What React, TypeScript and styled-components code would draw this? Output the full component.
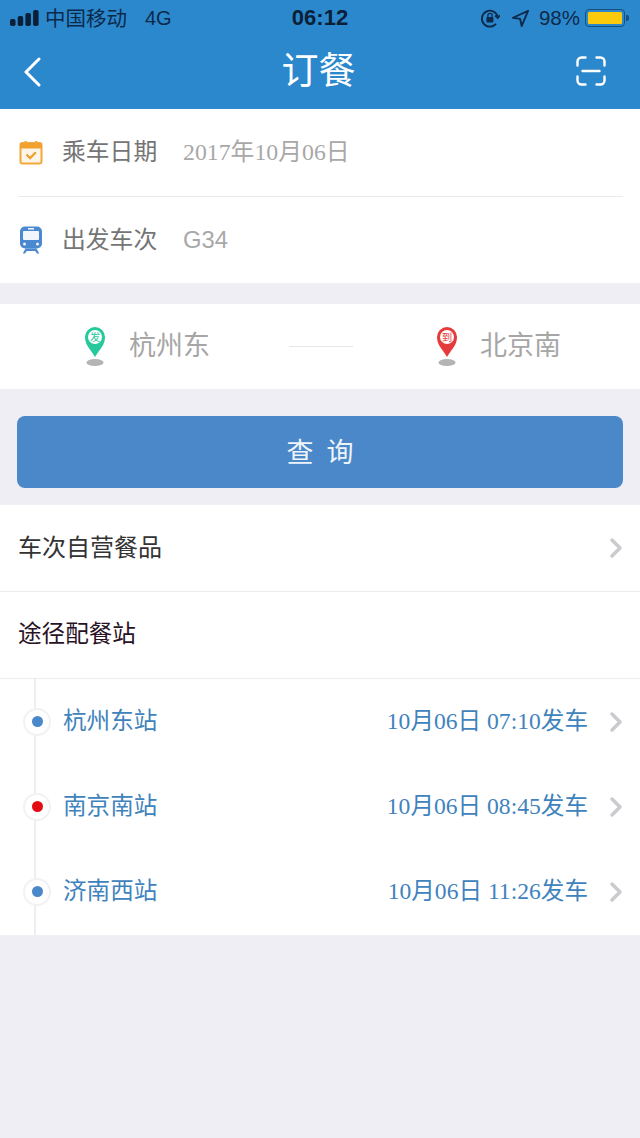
import React from "react";
import styled, { createGlobalStyle } from "styled-components";

const Global = createGlobalStyle`
  html, body { margin: 0; padding: 0; background: #eeeef4; }
  * { box-sizing: border-box; }
  body { font-family: "Noto Sans CJK SC", "Liberation Sans", sans-serif; }
`;

const Page = styled.div`
  width: 640px;
  height: 1138px;
  background: #eeeef4;
  overflow: hidden;
`;

const Header = styled.header`
  height: 109px;
  background: #2b88cd;
  display: flex;
  flex-direction: column;
`;

const StatusBar = styled.div`
  height: 36px;
  padding: 0 10px;
  display: grid;
  grid-template-columns: 1fr auto 1fr;
  align-items: center;
  color: #0c2a4a;
  font-size: 20.500px;
  font-family: "Liberation Sans", "Noto Sans CJK SC", sans-serif;
`;

const StatusLeft = styled.div`
  display: flex;
  align-items: center;
  gap: 6px;
`;

const Carrier = styled.span`
  padding-bottom: 2px;
`;

const Network = styled.span`
  margin-left: 12px;
  font-size: 20px;
`;

const StatusTime = styled.div`
  font-weight: 700;
  font-size: 22px;
  color: #0a1f38;
`;

const StatusRight = styled.div`
  display: flex;
  justify-content: flex-end;
  align-items: center;
  padding-right: 5px;
`;

const Percent = styled.span`
  margin: 0 5px 0 10px;
  font-size: 20.500px;
`;

const Battery = styled.span`
  width: 40px;
  height: 18px;
  border: 1.500px solid #17507f;
  border-radius: 4px;
  padding: 2px;
  display: flex;
  position: relative;

  &::after {
    content: "";
    position: absolute;
    right: -4.500px;
    top: 4.500px;
    width: 2.500px;
    height: 6px;
    border-radius: 0 2px 2px 0;
    background: #17507f;
  }
`;

const BatteryLevel = styled.span`
  flex: 1;
  background: #fdc90b;
  border-radius: 1.500px;
`;

const NavBar = styled.div`
  flex: 1;
  padding: 0 34px 0 23px;
  margin-top: -4px;
  display: flex;
  justify-content: space-between;
  align-items: center;
`;

const NavTitle = styled.h1`
  margin: 0;
  color: #fff;
  font-size: 37px;
  line-height: 1;
  font-weight: 400;
  flex: 1;
  text-align: center;
  padding: 0 0 4px 20px;
`;

const BackSlot = styled.span`
  display: flex;
  padding-top: 2px;
`;

const Card = styled.section`
  background: #fff;
`;

const FieldRow = styled.div<{ $height: number; $last?: boolean }>`
  height: ${(p) => p.$height}px;
  margin: 0 17px 0 18px;
  display: flex;
  align-items: center;
  border-bottom: ${(p) => (p.$last ? "none" : "1px solid #e9e9ee")};
`;

const FieldLabel = styled.span`
  margin-left: 19px;
  width: 121px;
  font-size: 23.800px;
  color: #757575;
  padding-bottom: 6px;
`;

const FieldValue = styled.span`
  font-family: "Liberation Serif", "Noto Sans CJK SC", serif;
  font-size: 23.800px;
  color: #a8a8a8;
  padding-bottom: 6px;
`;

const TrainValue = styled(FieldValue)`
  font-family: "Liberation Sans", sans-serif;
  padding-bottom: 0;
`;

const RouteCard = styled(Card)`
  margin-top: 21px;
  height: 85px;
  display: grid;
  grid-template-columns: 289px 64px 1fr;
  align-items: center;
`;

const RouteStop = styled.div<{ $pad: number; $gap: number }>`
  display: flex;
  align-items: center;
  padding-left: ${(p) => p.$pad}px;
  gap: ${(p) => p.$gap}px;
  font-size: 27px;
  color: #a6a6a6;
`;

const RouteName = styled.span`
  padding-bottom: 6px;
`;

const RouteLine = styled.div`
  height: 1px;
  background: #e6e6ea;
`;

const QueryButton = styled.button`
  display: block;
  margin: 27px 17px 17px;
  width: 606px;
  height: 72px;
  padding: 0 0 3px;
  border: none;
  border-radius: 8px;
  background: #4a88c9;
  color: #eef4fa;
  font-family: inherit;
  font-size: 27px;
  word-spacing: 7px;
`;

const LinkRow = styled.div<{ $height: number; $tint?: string; $size?: number }>`
  height: ${(p) => p.$height}px;
  padding: 0 17px 0 18px;
  display: flex;
  justify-content: space-between;
  align-items: center;
  font-size: ${(p) => p.$size ?? 24}px;
  color: ${(p) => p.$tint ?? "#333"};
  border-bottom: 1px solid #ebebf0;
`;

const LinkText = styled.span`
  padding-bottom: 6px;
`;

const Timeline = styled.div`
  height: 256px;
  position: relative;
  display: flex;
  flex-direction: column;

  &::before {
    content: "";
    position: absolute;
    left: 34px;
    top: 0;
    bottom: 0;
    width: 2px;
    background: #eeeef2;
  }
`;

const StopRow = styled.div`
  height: 85px;
  padding: 0 17px 0 23px;
  display: flex;
  align-items: center;
  position: relative;
`;

const Marker = styled.span`
  width: 28px;
  height: 28px;
  flex: none;
  border-radius: 50%;
  background: #fff;
  border: 2px solid #f3f1f4;
  display: flex;
  align-items: center;
  justify-content: center;
`;

const MarkerDot = styled.span<{ $color: string }>`
  width: 11px;
  height: 11px;
  border-radius: 50%;
  background: ${(p) => p.$color};
`;

const StopName = styled.span`
  margin-left: 12px;
  font-size: 23.600px;
  color: #3f83bd;
  padding-bottom: 6px;
`;

const StopTime = styled.span`
  margin-left: auto;
  margin-right: 21px;
  font-family: "Liberation Serif", "Noto Sans CJK SC", serif;
  font-size: 23.600px;
  color: #3f83bd;
  padding-bottom: 6px;
`;

const SignalIcon = () => (
  <svg width="29" height="16" viewBox="0 0 29 16" fill="#0a1f38">
    <rect x="0" y="9" width="5.500" height="7" rx="1.800" />
    <rect x="7.700" y="6" width="5.500" height="10" rx="1.800" />
    <rect x="15.400" y="3" width="5.500" height="13" rx="1.800" />
    <rect x="23.100" y="0" width="5.500" height="16" rx="1.800" />
  </svg>
);

const RotationLockIcon = () => (
  <svg width="20" height="20" viewBox="0 0 20 20" fill="none" stroke="#0c2a4a" strokeWidth="1.800">
    <path d="M17.600 8.500A8 8 0 1 0 16 15.900" />
    <path d="M15 7.600l2.800 2.400 2-2.800" />
    <rect x="6.400" y="9" width="7" height="5.600" rx="1" fill="#0c2a4a" stroke="none" />
    <path d="M7.900 9V7.400a2.100 2.100 0 0 1 4.200 0V9" strokeWidth="1.300" />
  </svg>
);

const LocationIcon = () => (
  <svg width="17" height="17" viewBox="0 0 18 18" fill="none" stroke="#0c2a4a" strokeWidth="2" strokeLinejoin="round" style={{ marginLeft: 12 }}>
    <path d="M17 1L1 8.200l7.600 1.200L10.200 17z" />
  </svg>
);

const BackIcon = () => (
  <svg width="18" height="30" viewBox="0 0 18 30" fill="none" stroke="#fff" strokeWidth="3" strokeLinecap="round" strokeLinejoin="round">
    <path d="M16 2L3 15l13 13" />
  </svg>
);

const ScanIcon = () => (
  <svg width="30" height="30" viewBox="0 0 30 30" fill="none" stroke="#fff" strokeWidth="2.400" strokeLinecap="round">
    <path d="M9.500 1.500H5.500a4 4 0 0 0-4 4v4" />
    <path d="M20.500 1.500h4a4 4 0 0 1 4 4v4" />
    <path d="M9.500 28.500H5.500a4 4 0 0 1-4-4v-4" />
    <path d="M20.500 28.500h4a4 4 0 0 0 4-4v-4" />
    <path d="M6.500 15h17" />
  </svg>
);

const CalendarIcon = () => (
  <svg width="25" height="25" viewBox="0 0 25 25" fill="none">
    <rect x="2.500" y="3" width="21" height="20.500" rx="2" fill="#fdf6e8" stroke="#f2a93b" strokeWidth="2" />
    <rect x="2" y="3" width="22" height="5.500" fill="#f2a02e" />
    <rect x="6.500" y="1" width="2.400" height="3.500" fill="#f2a93b" />
    <rect x="17" y="1" width="2.400" height="3.500" fill="#f2a93b" />
    <path d="M8.500 14.500l3.600 3.600 5.800-5.800" stroke="#f0a030" strokeWidth="2.200" />
  </svg>
);

const TrainIcon = () => (
  <svg width="25" height="28" viewBox="0 0 25 28">
    <rect x="2" y="0.500" width="22" height="22" rx="5" fill="#4a88d0" />
    <rect x="10" y="2" width="6" height="1.600" fill="#eaf2fb" />
    <rect x="5" y="5" width="16" height="9" rx="1" fill="#f2f6fb" />
    <circle cx="6.500" cy="18" r="1.500" fill="#eaf2fb" />
    <circle cx="19.500" cy="18" r="1.500" fill="#eaf2fb" />
    <path d="M7.500 22.500L4.800 27.500h2.200l1.800-2.400h8.400l1.800 2.400h2.200L18.500 22.500z" fill="#4a88d0" />
  </svg>
);

const PinIcon = ({ color, label }: { color: string; label: string }) => (
  <svg width="22" height="42" viewBox="0 0 22 42">
    <ellipse cx="11" cy="36.500" rx="8.500" ry="3.600" fill="#b4b4b4" />
    <path d="M11 31C7 24 1 19.500 1 11a10 10 0 0 1 20 0c0 8.500-6 13-10 20z" fill={color} />
    <circle cx="11" cy="11" r="7" fill="#fff" />
    <text x="11" y="15" textAnchor="middle" fontSize="10.500" fill={color} fontFamily="Noto Sans CJK SC, sans-serif">
      {label}
    </text>
  </svg>
);

const ChevronIcon = () => (
  <svg width="14" height="22" viewBox="0 0 14 22" fill="none" stroke="#cbcbcf" strokeWidth="3.500" strokeLinecap="round" strokeLinejoin="round">
    <path d="M3 3l8 8-8 8" />
  </svg>
);

const stops = [
  { name: "杭州东站", time: "10月06日 07:10发车", dot: "#4a88c9" },
  { name: "南京南站", time: "10月06日 08:45发车", dot: "#e30c12" },
  { name: "济南西站", time: "10月06日 11:26发车", dot: "#4a88c9" },
];

export default function App() {
  return (
    <Page>
      <Global />
      <Header>
        <StatusBar>
          <StatusLeft>
            <SignalIcon />
            <Carrier>中国移动</Carrier>
            <Network>4G</Network>
          </StatusLeft>
          <StatusTime>06:12</StatusTime>
          <StatusRight>
            <RotationLockIcon />
            <LocationIcon />
            <Percent>98%</Percent>
            <Battery>
              <BatteryLevel />
            </Battery>
          </StatusRight>
        </StatusBar>
        <NavBar>
          <BackSlot>
            <BackIcon />
          </BackSlot>
          <NavTitle>订餐</NavTitle>
          <ScanIcon />
        </NavBar>
      </Header>

      <Card>
        <FieldRow $height={88}>
          <CalendarIcon />
          <FieldLabel>乘车日期</FieldLabel>
          <FieldValue>2017年10月06日</FieldValue>
        </FieldRow>
        <FieldRow $height={86} $last>
          <TrainIcon />
          <FieldLabel>出发车次</FieldLabel>
          <TrainValue>G34</TrainValue>
        </FieldRow>
      </Card>

      <RouteCard>
        <RouteStop $pad={84} $gap={23}>
          <PinIcon color="#25c99b" label="发" />
          <RouteName>杭州东</RouteName>
        </RouteStop>
        <RouteLine />
        <RouteStop $pad={83} $gap={22}>
          <PinIcon color="#e63b3b" label="到" />
          <RouteName>北京南</RouteName>
        </RouteStop>
      </RouteCard>

      <QueryButton>查 询</QueryButton>

      <Card>
        <LinkRow $height={87}>
          <LinkText>车次自营餐品</LinkText>
          <ChevronIcon />
        </LinkRow>
        <LinkRow $height={87} $tint="#2a1226" $size={23.6}>
          <LinkText>途径配餐站</LinkText>
        </LinkRow>
        <Timeline>
          {stops.map((stop) => (
            <StopRow key={stop.name}>
              <Marker>
                <MarkerDot $color={stop.dot} />
              </Marker>
              <StopName>{stop.name}</StopName>
              <StopTime>{stop.time}</StopTime>
              <ChevronIcon />
            </StopRow>
          ))}
        </Timeline>
      </Card>
    </Page>
  );
}
